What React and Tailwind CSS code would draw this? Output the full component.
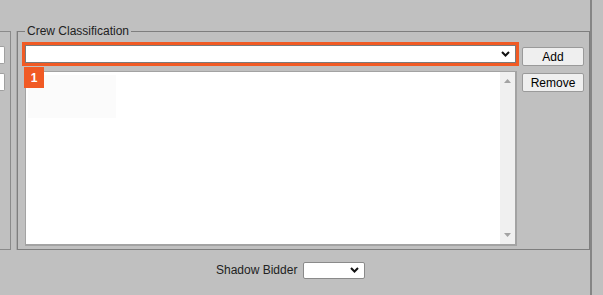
function Chevron() {
  return (
    <svg width="9" height="6" viewBox="0 0 9 6" className="shrink-0">
      <polyline points="1,1 4.5,4.5 8,1" fill="none" stroke="#111" strokeWidth="2" />
    </svg>
  );
}

function Btn({ children }) {
  return (
    <button className="w-[62px] h-[19px] bg-[#efefef] border border-[#9a9a9a] rounded-[2px] text-[12px] leading-none text-black">
      {children}
    </button>
  );
}

export default function App() {
  return (
    <div className="w-[603px] h-[295px] bg-[#c0c0c0] flex overflow-hidden font-['Liberation_Sans',Arial,sans-serif] text-[12px] text-[#222]">
      <div className="w-[592px] h-full border-r-2 border-[#858585] flex flex-col">
        <div className="flex items-start">
          {/* left (cut off) fieldset */}
          <div className="mt-[31px] w-[11px] h-[219px] border-t border-r border-b border-[#8a8a8a] flex flex-col pt-[14px] gap-[9px]">
            <div className="w-[5px] h-[18px] bg-white border border-l-0 border-[#a0a0a0] rounded-r-[2px]" />
            <div className="w-[5px] h-[18px] bg-white border border-l-0 border-[#a0a0a0] rounded-r-[2px]" />
          </div>

          {/* Crew Classification */}
          <fieldset className="ml-[6px] mt-[24px] w-[573px] h-[226px] border border-[#7e7e7e] shadow-[-1px_0_0_#a9a9a9] px-0 pt-[4px] pb-0">
            <legend className="ml-[7px] px-[2px] leading-[14px] text-[12px] text-[#222]">Crew Classification</legend>
            <div className="flex items-start pl-[4px]">
              <div className="relative flex flex-col">
                <div className="w-[497px] border-[3px] border-[#f15a24]">
                  <div className="h-[18px] bg-white border border-[#7a7a7a] flex items-center justify-end pr-[5px]">
                    <Chevron />
                  </div>
                </div>
                <div className="ml-[3px] mt-[5px] w-[492px] h-[175px] bg-white border-t border-l border-r-2 border-b-2 border-[#a3a3a3] flex">
                  <div className="flex-1 pt-[3px] pl-[2px]">
                    <div className="w-[88px] h-[43px] bg-[#fbfbfb]" />
                  </div>
                  <div className="w-[15px] bg-[#f0f0f0] flex flex-col items-center justify-between py-[7px]">
                    <svg width="7" height="4" viewBox="0 0 7 4">
                      <polygon points="0,4 3.5,0 7,4" fill="#a3a3a3" />
                    </svg>
                    <svg width="7" height="4" viewBox="0 0 7 4">
                      <polygon points="0,0 3.5,4 7,0" fill="#a3a3a3" />
                    </svg>
                  </div>
                </div>
                <div className="absolute left-[2px] top-[25px] w-[20px] h-[21px] bg-[#f15a24] text-white font-bold text-[12px] flex items-center justify-center">
                  1
                </div>
              </div>
              <div className="ml-[3px] mt-[5px] flex flex-col gap-[7px]">
                <Btn>Add</Btn>
                <Btn>Remove</Btn>
              </div>
            </div>
          </fieldset>
        </div>

        <div className="flex items-center mt-[11px] pl-[216px] gap-[6px]">
          <span className="text-[12px] text-[#222]">Shadow Bidder</span>
          <div className="w-[62px] h-[17px] bg-white border border-[#8a8a8a] rounded-[2px] flex items-center justify-end pr-[5px]">
            <Chevron />
          </div>
        </div>
      </div>
    </div>
  );
}
